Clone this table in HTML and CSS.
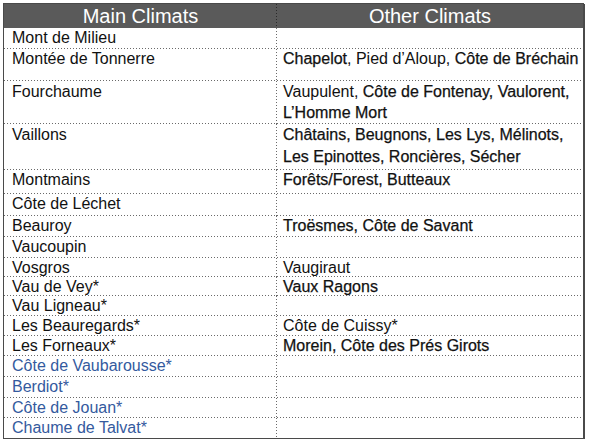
FILE: index.html
```html
<!DOCTYPE html>
<html lang="fr">
<head>
<meta charset="utf-8">
<title>Chablis Premier Cru Climats</title>
<link rel="stylesheet" href="styles.css">
</head>
<body>
<div class="table">
  <div class="row head"><div class="c main">Main Climats</div><div class="c other">Other Climats</div></div>
  <div class="row h21"><div class="c main">Mont de Milieu</div><div class="c other"></div></div>
  <div class="row h32"><div class="c main">Montée de Tonnerre</div><div class="c other"><b>Chapelot</b>, Pied d’Aloup, <b>Côte de Bréchain</b></div></div>
  <div class="row h43"><div class="c main">Fourchaume</div><div class="c other">Vaupulent, <b>Côte de Fontenay, Vaulorent, L’Homme Mort</b></div></div>
  <div class="row h46"><div class="c main">Vaillons</div><div class="c other"><b>Châtains, Beugnons, Les Lys, Mélinots, Les Epinottes, Roncières, Sécher</b></div></div>
  <div class="row h24"><div class="c main">Montmains</div><div class="c other"><b>Forêts/Forest, Butteaux</b></div></div>
  <div class="row h22"><div class="c main">Côte de Léchet</div><div class="c other"></div></div>
  <div class="row h21"><div class="c main">Beauroy</div><div class="c other"><b>Troësmes, Côte de Savant</b></div></div>
  <div class="row h21"><div class="c main">Vaucoupin</div><div class="c other"></div></div>
  <div class="row h19"><div class="c main">Vosgros</div><div class="c other">Vaugiraut</div></div>
  <div class="row h19"><div class="c main">Vau de Vey*</div><div class="c other"><b>Vaux Ragons</b></div></div>
  <div class="row"><div class="c main">Vau Ligneau*</div><div class="c other"></div></div>
  <div class="row"><div class="c main">Les Beauregards*</div><div class="c other">Côte de Cuissy*</div></div>
  <div class="row"><div class="c main">Les Forneaux*</div><div class="c other"><b>Morein, Côte des Prés Girots</b></div></div>
  <div class="row h21 blue"><div class="c main">Côte de Vaubarousse*</div><div class="c other"></div></div>
  <div class="row h21 blue"><div class="c main">Berdiot*</div><div class="c other"></div></div>
  <div class="row blue"><div class="c main">Côte de Jouan*</div><div class="c other"></div></div>
  <div class="row blue last"><div class="c main">Chaume de Talvat*</div><div class="c other"></div></div>
</div>
</body>
</html>
```

FILE: styles.css
```css
html, body {
  margin: 0;
  padding: 0;
  background: #ffffff;
}

body {
  padding: 3px 0 0 3px;
  font-family: "Liberation Sans", Arial, sans-serif;
  font-size: 16px;
  color: #111111;
}

.table {
  width: 581px;
  border: 1px solid #4a4a4a;
  box-shadow: 1px 1px 0 #4a4a4a;
  box-sizing: border-box;
}

.row {
  display: grid;
  grid-template-columns: 273px 1fr;
  height: 20px;
}

.row.h19 { height: 19px; }
.row.h21 { height: 21px; }
.row.h22 { height: 22px; }
.row.h24 { height: 24px; }
.row.h32 { height: 32px; }
.row.h43 { height: 43px; }
.row.h46 { height: 46px; }

.c {
  line-height: 20px;
  padding-left: 8px;
  overflow: hidden;
  background:
    linear-gradient(to right, #6a6a6a 1px, transparent 1px) left bottom / 3px 1px repeat-x;
}

.main {
  background:
    linear-gradient(to bottom, #6a6a6a 1px, transparent 1px) right top / 1px 3px repeat-y,
    linear-gradient(to right, #6a6a6a 1px, transparent 1px) left bottom / 3px 1px repeat-x;
}

.other {
  padding-left: 6px;
}

.h43 .c {
  line-height: 21px;
}

.h46 .c {
  line-height: 22px;
}

.other b {
  font-weight: normal;
  -webkit-text-stroke: 0.25px currentColor;
}

.blue {
  color: #345a9e;
}

.last .c {
  background: none;
}

.last .main {
  background: linear-gradient(to bottom, #6a6a6a 1px, transparent 1px) right top / 1px 3px repeat-y;
}

.head {
  height: 24px;
  background: #5a5a5a;
  color: #ffffff;
}

.head .c {
  font-size: 20px;
  line-height: 24px;
  text-align: center;
  padding-left: 0;
  background: none;
}

.head .main {
  background: linear-gradient(to bottom, #2a2a2a 1px, transparent 1px) right top / 1px 3px repeat-y;
}
```
